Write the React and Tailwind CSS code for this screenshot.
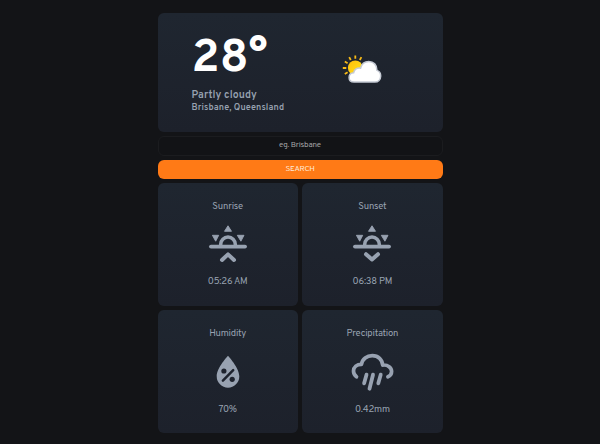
const stroke = { fill: "none", stroke: "#98a2b1", strokeWidth: 3.7, strokeLinecap: "round", strokeLinejoin: "round" };

function SunIcon({ down }) {
  return (
    <svg width="40" height="40" viewBox="0 0 40 40">
      <g fill="#98a2b1" stroke="#98a2b1" strokeWidth="0.9" strokeLinejoin="round">
        <path d="M20 1.8 23.5 7.3H16.5Z" />
        <path d="M4.4 11.3H10.7L7.7 17.2Z" />
        <path d="M29.3 11.3H36L32.9 17.2Z" />
      </g>
      <path d="M12.7 21.5v-1.2a7.3 7.3 0 0 1 14.6 0v1.2" {...stroke} strokeWidth={3.5} />
      <path d="M3 22.6H37" {...stroke} strokeWidth={3.9} />
      <path d={down ? "M14 30.2 20 35.4 26 30.2" : "M14 36 20 30.4 26 36"} {...stroke} strokeWidth={4} />
    </svg>
  );
}

function DropIcon() {
  return (
    <svg width="40" height="40" viewBox="0 0 40 40">
      <path d="M20 3.7C20 3.7 8.7 15.8 8.7 24.3A11.3 11.4 0 0 0 31.3 24.3C31.3 15.8 20 3.7 20 3.7Z" fill="#98a2b1" />
      <g fill="#1e232e">
        <circle cx="15.9" cy="19" r="2.6" />
        <circle cx="24.2" cy="27.3" r="2.6" />
      </g>
      <path d="M14.9 28.6 25.2 18.2" stroke="#1e232e" strokeWidth="2.5" strokeLinecap="round" />
    </svg>
  );
}

function RainIcon() {
  return (
    <svg width="44" height="40" viewBox="0 0 44 40">
      <path d="M6.5 24.8C4.5 23.3 3.5 21.3 3.5 19.1C3.5 15.1 6.9 12.3 11.5 12.3C12.3 7.1 16.9 3.6 22.3 3.6C28.3 3.6 32.3 7.7 32.7 13.1C37.9 12.5 41.6 15.7 41.6 19.6C41.6 22.1 40.1 23.9 37.9 24.8" {...stroke} />
      <path d="M16.5 22.7 14.1 31.3M23 22.7 19.5 36.7M30.7 22.7 28.3 31.3" {...stroke} strokeWidth={3.8} />
    </svg>
  );
}

function WeatherIcon() {
  return (
    <svg width="44" height="34" viewBox="0 0 44 34">
      <defs>
        <linearGradient id="sun" x1="0" y1="0" x2="1" y2="1">
          <stop offset="0" stopColor="#ffbd0b" />
          <stop offset="1" stopColor="#ffe51c" />
        </linearGradient>
      </defs>
      <path d="M15.3 6.8V3.4M10.8 8 9.2 5.1M19.8 8 21.4 5.1M7.6 11.2 4.8 9.5M6.3 16H2.8M7.6 20.3 4.8 22" stroke="#f6b917" strokeWidth="1.8" />
      <circle cx="15.3" cy="15.8" r="7.4" fill="url(#sun)" />
      <path d="M14 30C11 30 9.1 28 9.1 25.4C9.1 22.7 10.9 21 13.6 20.8C14.2 17.4 17.2 15.5 20.6 16.2C21.6 11.9 24.8 9.4 28.8 9.4C33.6 9.4 37 13 37 18.4C39.4 19.2 40.7 21.3 40.7 24C40.7 27.6 38.2 30 34.9 30Z" fill="#fff" stroke="#c5cad4" strokeWidth="1.5" />
    </svg>
  );
}

function Card({ title, value, children }) {
  return (
    <div className="flex h-[123px] flex-col items-center rounded-md bg-linear-to-b from-[#1f2630] to-[#1d212b] text-[9.5px] leading-3 tracking-[-0.22px] text-[#98a2b1]">
      <span className="mt-[18px] whitespace-nowrap">{title}</span>
      <div className="mt-[11.4px] h-10">{children}</div>
      <span className="mt-3 whitespace-nowrap">{value}</span>
    </div>
  );
}

export default function App() {
  return (
    <div className="flex h-[444px] w-full justify-center overflow-hidden bg-[#131417] pt-[12.6px] font-['Overpass','Roboto',sans-serif]">
      <main className="w-[285px]">
        <section className="flex h-[119px] rounded-md bg-linear-to-b from-[#1f2630] to-[#1d212b]">
          <div className="w-[182.5px] pl-[34px] pt-[22px] text-[#98a2b1]">
            <h1 className="h-[50px] text-[46px] font-bold leading-[50px] text-white">28°</h1>
            <p className="mt-1 text-[10.5px] font-semibold leading-[13px] tracking-[0.1px]">Partly cloudy</p>
            <p className="whitespace-nowrap text-[9px] font-semibold leading-3 tracking-[0.1px]">Brisbane, Queensland</p>
          </div>
          <div className="pt-[39.4px]"><WeatherIcon /></div>
        </section>
        <input
          placeholder="eg. Brisbane"
          className="mt-[4px] block h-[20.5px] w-full rounded-md border border-[#1b1c1f] bg-[#121316] pb-[2px] text-center text-[8px] tracking-[-0.22px] placeholder:text-[#a3a3a5]"
        />
        <button className="mt-[3.5px] block h-[19px] w-full rounded-md bg-[#ff7a16] text-[8px] leading-none tracking-[-0.3px] text-[#ffe9d5]">SEARCH</button>
        <section className="mt-[4.4px] grid grid-cols-2 gap-[4.5px]">
          <Card title="Sunrise" value="05:26 AM"><SunIcon /></Card>
          <Card title="Sunset" value="06:38 PM"><SunIcon down /></Card>
          <Card title="Humidity" value="70%"><DropIcon /></Card>
          <Card title="Precipitation" value="0.42mm"><RainIcon /></Card>
        </section>
      </main>
    </div>
  );
}
